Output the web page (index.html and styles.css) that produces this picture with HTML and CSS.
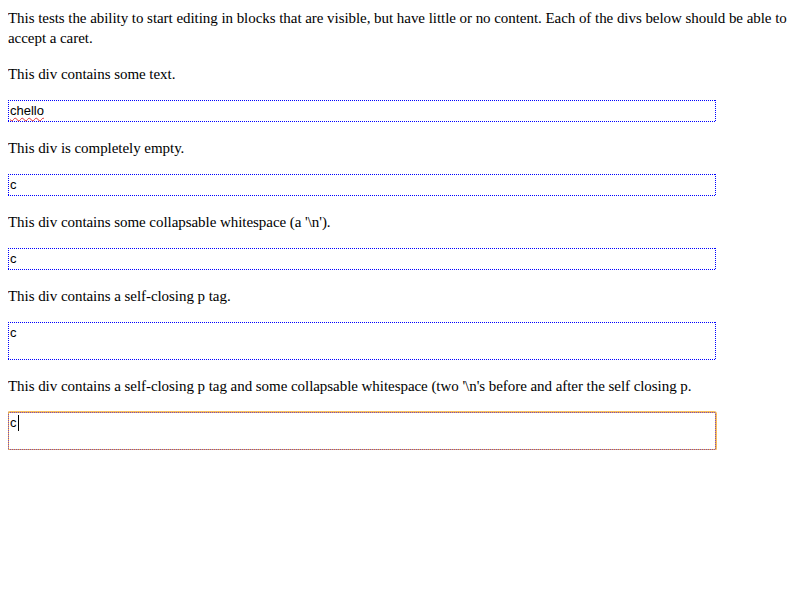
FILE: index.html
```html
<!DOCTYPE html>
<html>
<head>
<meta charset="utf-8">
<link rel="stylesheet" href="styles.css">
</head>
<body>
<p class="intro">This tests the ability to start editing in blocks that are visible, but have little or no content. Each of the divs below should be able to accept a caret.</p>
<p>This div contains some text.</p>
<div class="edit"><span class="spell">chello</span></div>
<p>This div is completely empty.</p>
<div class="edit">c</div>
<p>This div contains some collapsable whitespace (a '\n').</p>
<div class="edit">c</div>
<p>This div contains a self-closing p tag.</p>
<div class="edit tall">c</div>
<p>This div contains a self-closing p tag and some collapsable whitespace (two '\n's before and after the self closing p.</p>
<div class="edit tall focused">c<span class="caret"></span></div>
</body>
</html>
```
FILE: styles.css
```css
html, body {
  background: #fff;
}
body {
  margin: 8px;
  font-family: "Liberation Serif", "Times New Roman", serif;
  font-size: 15px;
  letter-spacing: -0.05px;
  line-height: 20px;
  color: #000;
}
p {
  margin: 16px 0;
}
p.intro {
  margin-top: 0;
}
.edit {
  --dot: #0000ff;
  box-sizing: border-box;
  width: 708px;
  height: 22px;
  padding: 1px 0 1px 2px;
  font-family: "Liberation Sans", Arial, sans-serif;
  font-size: 13px;
  letter-spacing: 0;
  line-height: 20px;
  background:
    repeating-linear-gradient(90deg, var(--dot) 0 1px, transparent 1px 2px) left top / 100% 1px no-repeat,
    repeating-linear-gradient(90deg, var(--dot) 0 1px, transparent 1px 2px) left bottom / 100% 1px no-repeat,
    repeating-linear-gradient(180deg, var(--dot) 0 1px, transparent 1px 2px) left top / 1px 100% no-repeat,
    repeating-linear-gradient(180deg, var(--dot) 0 1px, transparent 1px 2px) right top / 1px 100% no-repeat;
  background-color: #fff;
}
.edit.tall {
  height: 38px;
}
.spell {
  text-decoration: underline wavy #e03030;
  text-decoration-thickness: 1px;
  text-underline-offset: 2px;
}
.focused {
  --dot: #7a4cc0;
  background:
    repeating-linear-gradient(90deg, var(--dot) 0 1px, transparent 1px 2px) left top / 100% 1px no-repeat,
    repeating-linear-gradient(90deg, var(--dot) 0 1px, transparent 1px 2px) left bottom / 100% 1px no-repeat,
    repeating-linear-gradient(180deg, var(--dot) 0 1px, transparent 1px 2px) left top / 1px 100% no-repeat,
    repeating-linear-gradient(180deg, var(--dot) 0 1px, transparent 1px 2px) right top / 1px 100% no-repeat,
    linear-gradient(#fff, #fff) 1px 1px / calc(100% - 2px) calc(100% - 2px) no-repeat;
  background-color: #f5b23c;
  box-shadow: 0 0 0 1px #f8c060;
  border-radius: 2px;
}
.caret {
  display: inline-block;
  width: 1px;
  height: 16px;
  background: #000;
  vertical-align: -4px;
  margin-left: 1px;
}
```
